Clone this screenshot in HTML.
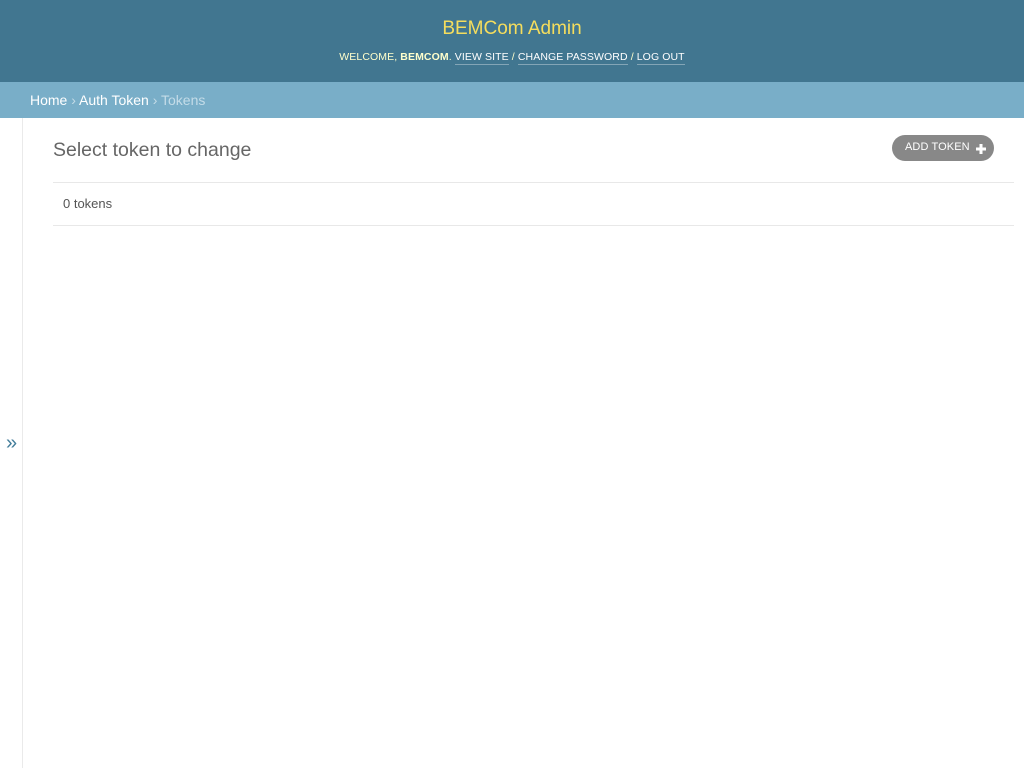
<!DOCTYPE html>
<html><head><meta charset="utf-8"><style>
body{margin:0;font-family:"Liberation Sans",sans-serif;background:#fff;width:1024px;height:768px;overflow:hidden;position:relative}
#header{background:#417690;height:82px;text-align:center;color:#ffc}
#brand{padding-top:17px;font-size:19px;color:#f5dd5d;height:24px;line-height:24px}
#tools{margin-top:9px;font-size:10.5px;letter-spacing:.1px;line-height:14px}
#tools a{color:#fff;text-decoration:none;border-bottom:1px solid rgba(255,255,255,.35);padding-bottom:1px}
.bc{background:#79aec8;height:36px;line-height:36px;padding-left:30px;font-size:14px;color:#c4dce8}
.bc a{color:#fff;text-decoration:none}
#side{position:absolute;left:0;top:118px;width:22px;height:650px;border-right:1px solid #eaeaea}
#side span{position:absolute;left:6px;top:314px;color:#447e9b;font-size:20px}
h1{position:absolute;left:53px;top:139px;margin:0;font-size:19.5px;font-weight:normal;color:#666}
.btn{position:absolute;left:892px;top:135px;width:102px;height:26px;border-radius:13px;background:#888;color:#fff;font-size:11px;letter-spacing:.1px;line-height:26px}
.btn .t{position:absolute;left:13px;top:-1px}
.btn .p{position:absolute;left:84px;top:9px;width:10px;height:10px}
.rule{position:absolute;left:53px;width:961px;border-top:1px solid #e8e8e8}
.cnt{position:absolute;left:63px;top:196px;font-size:13px;color:#555}
</style></head><body>
<div id="header"><div id="brand">BEMCom Admin</div>
<div id="tools">WELCOME, <b>BEMCOM</b>. <a>VIEW SITE</a> / <a>CHANGE PASSWORD</a> / <a>LOG OUT</a></div></div>
<div class="bc"><a>Home</a> › <a>Auth Token</a> › Tokens</div>
<div id="side"><span>»</span></div>
<h1>Select token to change</h1>
<div class="btn"><span class="t">ADD TOKEN</span><svg class="p" viewBox="0 0 10 10"><path d="M5 0v10M0 5h10" stroke="#fff" stroke-width="3"/></svg></div>
<div class="rule" style="top:182px"></div>
<div class="cnt">0 tokens</div>
<div class="rule" style="top:225px"></div>
</body></html>
